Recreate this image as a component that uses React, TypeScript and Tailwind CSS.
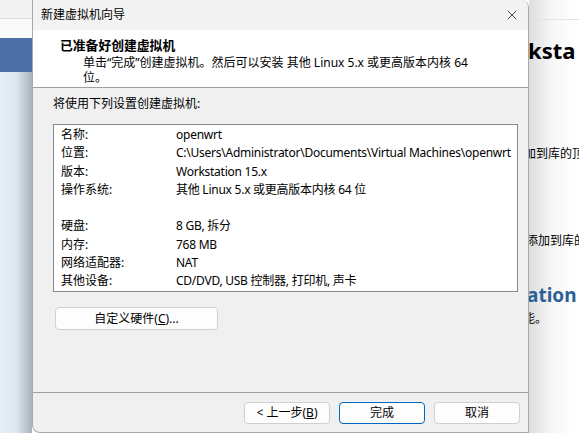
import { X } from "lucide-react";

const font = "font-['Noto_Sans','Noto_Sans_CJK_SC',sans-serif]";

const rows: [string, string][] = [
  ["名称:", "openwrt"],
  ["位置:", "C:\\Users\\Administrator\\Documents\\Virtual Machines\\openwrt"],
  ["版本:", "Workstation 15.x"],
  ["操作系统:", "其他 Linux 5.x 或更高版本内核 64 位"],
  ["", ""],
  ["硬盘:", "8 GB, 拆分"],
  ["内存:", "768 MB"],
  ["网络适配器:", "NAT"],
  ["其他设备:", "CD/DVD, USB 控制器, 打印机, 声卡"],
];

function Btn({ children, primary }: { children: React.ReactNode; primary?: boolean }) {
  return (
    <button
      className={
        "h-[22px] w-[86px] rounded-[4px] border bg-[#fdfdfd] text-[12px] leading-none text-black " +
        (primary ? "border-[#0067c0]" : "border-[#d0d0d0]")
      }
    >
      {children}
    </button>
  );
}

export default function App() {
  return (
    <div className={`flex h-[433px] w-[579px] overflow-hidden bg-white text-[12px] text-black ${font}`}>
      {/* left background window */}
      <div className="flex w-[32px] shrink-0 flex-col">
        <div className="h-[19px] border-b border-[#dcdcdc] bg-[#f3f3f3]" />
        <div className="h-[19px] bg-[#f9f9f9]" />
        <div className="h-[34px] bg-[#4d6ea7]" />
        <div className="flex-1 bg-gradient-to-r from-[#e6eef7] via-[#dfe7f1] to-[#aab2be]" />
      </div>

      {/* dialog */}
      <div className="flex h-[433px] w-[497px] shrink-0 flex-col overflow-hidden rounded-tr-[8px] rounded-bl-[8px] border border-t-0 border-[#a9a9a9] bg-[#f0f0f0]">
        <div className="flex h-[30px] items-center justify-between bg-[#f3f3f3] pl-[8px] pr-[8px]">
          <span>新建虚拟机向导</span>
          <X className="size-[16px] text-[#222]" strokeWidth={1.2} />
        </div>
        <div className="h-[58px] border-b border-[#a0a0a0] bg-white pl-[27px] pt-[6px]">
          <div className="text-[12.8px] font-bold leading-[19px]">已准备好创建虚拟机</div>
          <div className="pl-[23px] leading-[15px]">
            <div className="h-[15px]">单击“完成”创建虚拟机。然后可以安装 其他 Linux 5.x 或更高版本内核 64</div>
            <div className="h-[15px]">位。</div>
          </div>
        </div>
        <div className="flex flex-1 flex-col px-[20px] pt-[7px]">
          <div className="leading-[18px]">将使用下列设置创建虚拟机:</div>
          <div className="mt-[11px] h-[168px] w-[465px] border border-[#848891] bg-white py-[1px] pl-[7px]">
            {rows.map(([k, v], i) => (
              <div key={i} className="flex h-[18.25px] items-center whitespace-nowrap">
                <span className="w-[115px] shrink-0">{k}</span>
                <span className="tracking-[-0.25px]">{v}</span>
              </div>
            ))}
          </div>
          <button className="ml-[2px] mt-[15px] h-[23px] w-[163px] rounded-[4px] border border-[#d0d0d0] bg-[#fdfdfd] text-[12px]">
            自定义硬件(<span className="underline">C</span>)...
          </button>
        </div>
        <div className="flex h-[40px] items-start justify-end gap-[9px] border-t border-[#a0a0a0] pr-[8px] pt-[9px]">
          <Btn>
            &lt; 上一步(<span className="underline">B</span>)
          </Btn>
          <Btn primary>完成</Btn>
          <Btn>取消</Btn>
        </div>
      </div>

      {/* right background window */}
      <div className="flex flex-1 flex-col overflow-hidden whitespace-nowrap bg-gradient-to-r from-[#dedede] via-[#f8f8f8] to-white">
        <div className="h-[20px] border-b border-[#e2e2e2]" />
        <div className="mt-[16px] -ml-[1px] text-[22px] font-bold leading-[28px]">ksta</div>
        <div className="mt-[82px] -ml-[5px] leading-[16px]">加到库的顶</div>
        <div className="mt-[71px] -ml-[3px] leading-[16px]">添加到库的</div>
        <div className="mt-[34px] -ml-[2px] text-[19px] font-bold leading-[24px] text-[#2c5f96]">ation I</div>
        <div className="mt-[4px] -ml-[6px] leading-[16px]">能。</div>
      </div>
    </div>
  );
}
